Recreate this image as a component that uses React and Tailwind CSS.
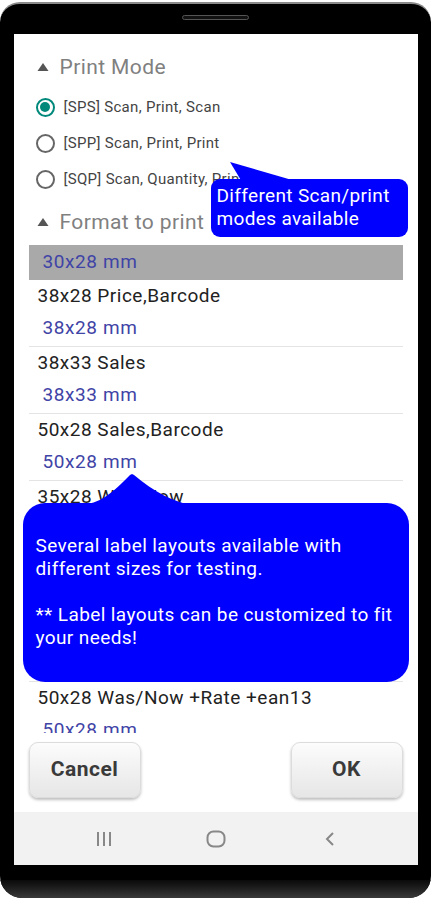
import React from "react";

const items = [
    { title: "38x28 Price,Barcode", size: "38x28 mm" },
    { title: "38x33 Sales", size: "38x33 mm" },
    { title: "50x28 Sales,Barcode", size: "50x28 mm" },
    { title: "35x28 Was/Now", size: "35x28 mm" },
    { title: "50x28 Was/Now", size: "50x28 mm" },
    { title: "50x28 Was/Now +Rate", size: "50x28 mm" },
    { title: "50x28 Was/Now +Rate +ean13", size: "50x28 mm" },
];

const modes = [
    "[SPS] Scan, Print, Scan",
    "[SPP] Scan, Print, Print",
    "[SQP] Scan, Quantity, Print",
];

const Radio = ({ checked }) => (
    <span
        className={`w-[19px] h-[19px] rounded-full border-2 flex items-center justify-center shrink-0 ${
            checked ? "border-[#00897b]" : "border-[#666]"
        }`}
    >
        {checked && <span className="w-[10px] h-[10px] rounded-full bg-[#00897b]" />}
    </span>
);

const SectionHeader = ({ label }) => (
    <div className="h-[26px] flex items-center pl-[23px] gap-[11px] text-[#808080]">
        <svg width="12" height="10" viewBox="0 0 12 10">
            <path d="M6 1 L11.5 9 L0.5 9 Z" fill="#555" />
        </svg>
        <span className="text-[21px] leading-none tracking-[0.4px]">{label}</span>
    </div>
);

const Button = ({ label }) => (
    <button className="w-[112px] h-[56px] rounded-[9px] border border-[#dcdcdc] bg-gradient-to-b from-[#fcfcfc] to-[#e6e6e6] shadow-[0_2px_3px_rgba(0,0,0,0.25)] text-[21px] font-bold tracking-[0.5px] text-[#3a3a3a]">
        {label}
    </button>
);

export default function App() {
    return (
        <div className="w-[431px] h-[900px] bg-white pt-[2px] font-['Roboto',sans-serif]">
            <div className="relative w-[431px] h-[896px] rounded-t-[20px] rounded-b-[22px] bg-black border-t-2 border-[#8a8a8a] flex flex-col items-center overflow-hidden">
                {/* speaker */}
                <div className="mt-[11px] w-[67px] h-[5px] rounded-full border border-[#555] bg-[#111]" />
                {/* screen */}
                <div className="mt-[14px] w-[404px] h-[831px] bg-white flex flex-col relative">
                    <div className="mt-[20px]">
                        <SectionHeader label="Print Mode" />
                    </div>
                    <div className="mt-[9px] pl-[22px]">
                        {modes.map((m, i) => (
                            <div key={m} className="h-9 flex items-center gap-[9px]">
                                <Radio checked={i === 0} />
                                <span className="text-[15px] tracking-[0.3px] text-[#444]">{m}</span>
                            </div>
                        ))}
                    </div>
                    <div className="mt-[12px]">
                        <SectionHeader label="Format to print" />
                    </div>
                    {/* list */}
                    <div className="mt-[10px] mx-[15px] h-[488px] overflow-hidden">
                        <div className="h-[35px] bg-[#a9a9a9] flex items-center pl-[14px] text-[19px] tracking-[0.6px] text-[#3f44a6]">
                            30x28 mm
                        </div>
                        {items.map((it) => (
                            <div key={it.title} className="h-[67px] border-b border-[#e4e4e4] flex flex-col">
                                <div className="h-[32px] flex items-center pl-[9px] text-[19px] tracking-[0.5px] text-[#222]">
                                    {it.title}
                                </div>
                                <div className="h-[32px] flex items-center pl-[14px] text-[19px] tracking-[0.6px] text-[#3f44a6]">
                                    {it.size}
                                </div>
                            </div>
                        ))}
                    </div>
                    {/* buttons */}
                    <div className="mt-[9px] px-[15px] flex justify-between">
                        <Button label="Cancel" />
                        <Button label="OK" />
                    </div>
                    {/* nav bar */}
                    <div className="mt-auto h-[53px] bg-[#f2f2f2] flex items-center pl-[81px]">
                        <svg width="18" height="16" viewBox="0 0 18 16">
                            <path d="M3 1v14M9 1v14M15 1v14" stroke="#888" strokeWidth="2" />
                        </svg>
                        <svg className="ml-[93px]" width="20" height="18" viewBox="0 0 20 18">
                            <rect x="1.5" y="1.5" width="17" height="15" rx="6" fill="none" stroke="#888" strokeWidth="2" />
                        </svg>
                        <svg className="ml-[98px]" width="12" height="16" viewBox="0 0 12 16">
                            <path d="M9 2 L3 8 L9 14" fill="none" stroke="#888" strokeWidth="2" />
                        </svg>
                    </div>

                    {/* callout 1 */}
                    <svg className="absolute left-[216px] top-[128px]" width="62" height="20" viewBox="0 0 62 20">
                        <path d="M0 0 L62 18 L62 20 L12 20 Z" fill="#0000ff" />
                    </svg>
                    <div className="absolute left-[197px] top-[145px] w-[197px] h-[58px] rounded-[9px] bg-[#0000ff] text-white text-[19px] tracking-[0.35px] leading-[23px] pl-[6px] pt-[5px]">
                        Different Scan/print
                        <br />
                        modes available
                    </div>

                    {/* callout 2 */}
                    <svg className="absolute left-[60px] top-[440px]" width="120" height="32" viewBox="0 0 120 32">
                        <path d="M0 32 C20 30 30 28 56 1 L58 0 L60 1 C80 18 100 28 120 32 Z" fill="#0000ff" />
                    </svg>
                    <div className="absolute left-[9px] top-[469px] w-[386px] h-[179px] rounded-[22px] bg-[#0000ff] text-white text-[19px] tracking-[0.4px] leading-[23px] px-[13px] pt-[31px]">
                        Several label layouts available with
                        <br />
                        different sizes for testing.
                        <br />
                        <br />
                        ** Label layouts can be customized to fit
                        <br />
                        your needs!
                    </div>
                </div>
                {/* bottom edge */}
                <div className="mt-auto w-full h-[18px] bg-gradient-to-b from-[#0a0a0a] to-[#3a3a3a]" />
            </div>
        </div>
    );
}
